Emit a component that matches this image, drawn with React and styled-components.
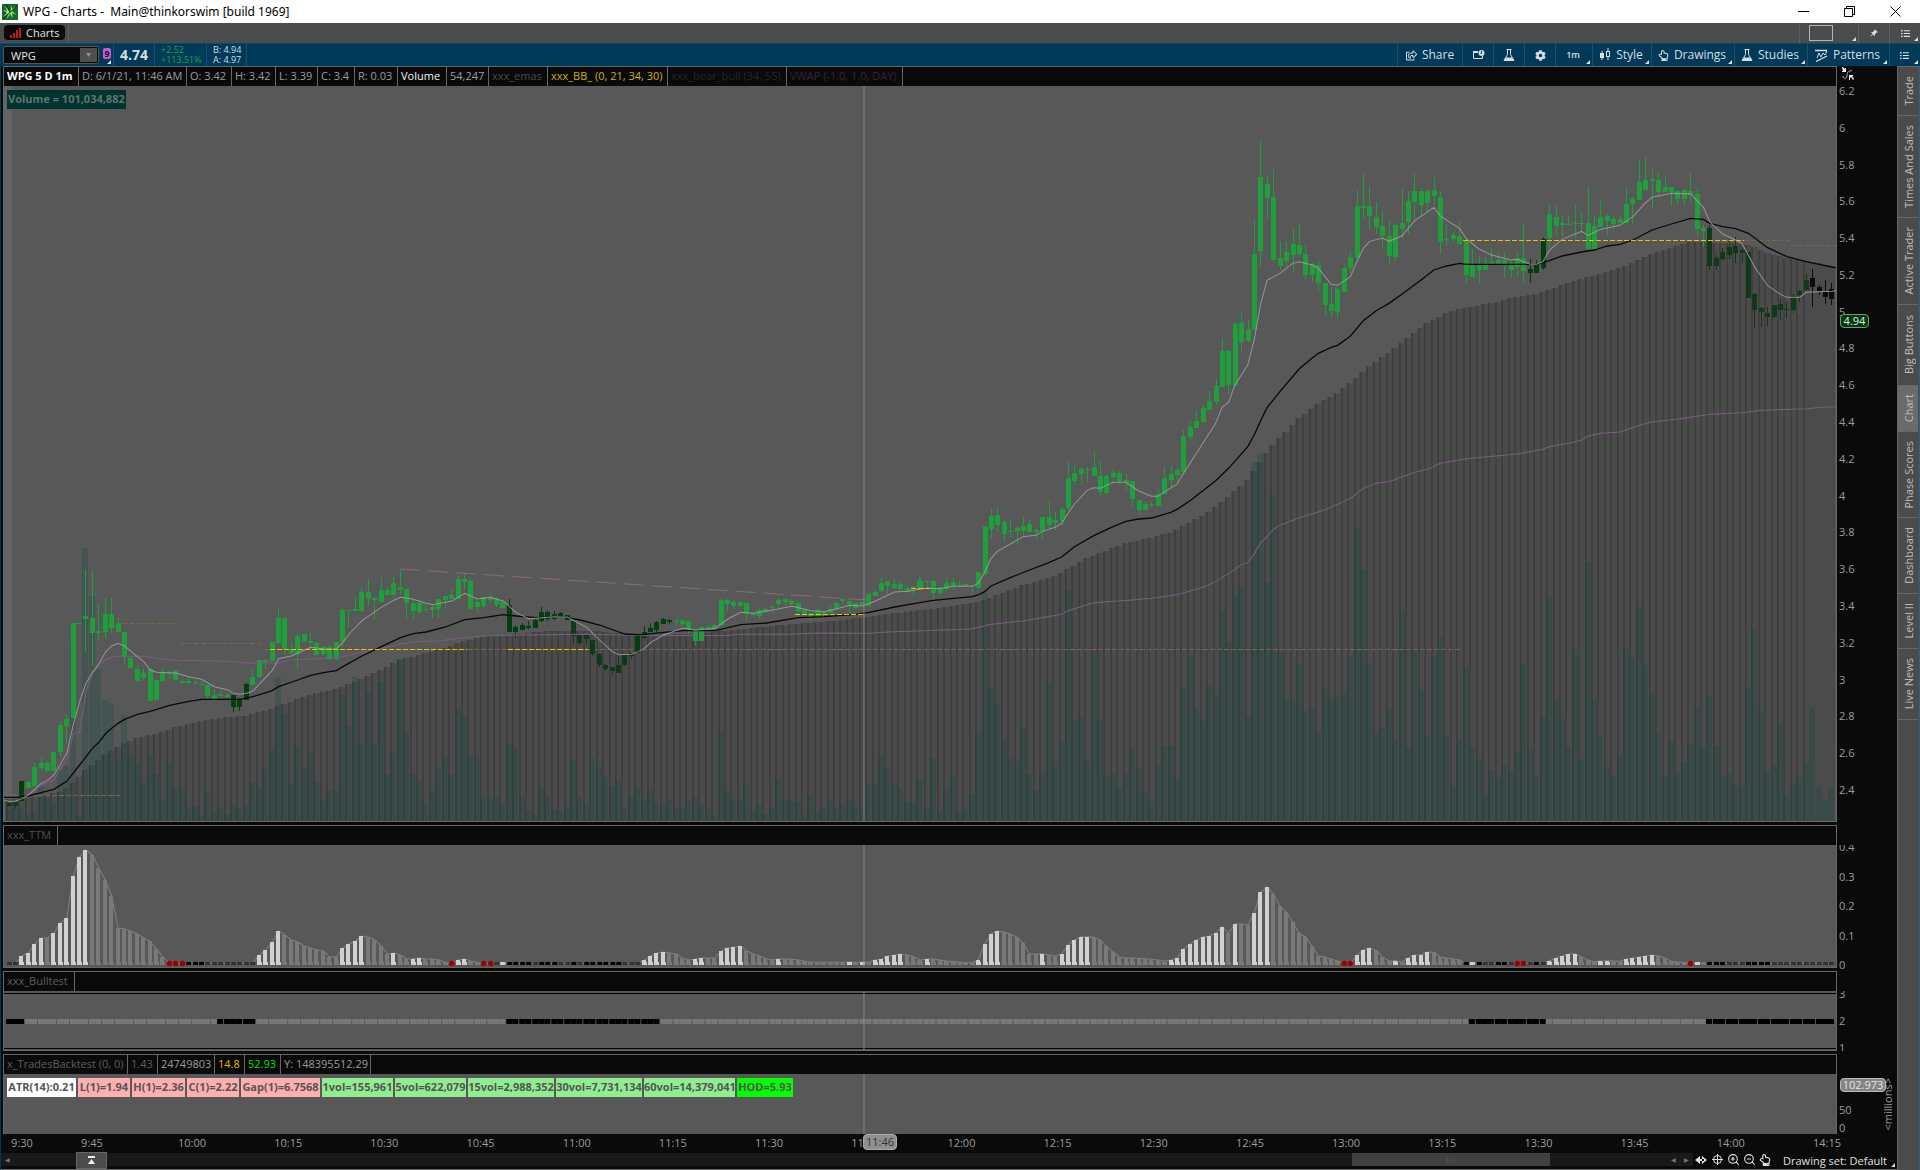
import React from "react";
import styled, { createGlobalStyle, css } from "styled-components";
import { ZoomIn, ZoomOut } from "lucide-react";
import {
  FaCog,
  FaListUl,
  FaRegHandPointUp,
  FaRegShareSquare,
} from "react-icons/fa";
import { BsPinAngleFill } from "react-icons/bs";

const GlobalStyle = createGlobalStyle`
  * {
    box-sizing: border-box;
  }
  body {
    margin: 0;
    background: #0a0a0a;
    color: #9c9c9c;
    font-family: "Open Sans", "Noto Sans", sans-serif;
    font-size: 11px;
  }
  button, input {
    font: inherit;
    color: inherit;
    background: none;
    border: 0;
    padding: 0;
    margin: 0;
  }
`;

/* ---------- chart data ---------- */

// plot units: 3 per pixel, counted down from y = 110
const toY = (v) => 110 + v / 3;
const STEP = 6.415;
const barX = (i) => 9 + i * STEP;
const PLOT_BOTTOM = 821;
const CROSSHAIR_X = 863;

const shift = (offset, list) => list.map((v) => v + offset);

// "high top bottom low", separated by commas
const candles = (offset, text) =>
  text.split(",").map((row) => shift(offset, row.trim().split(" ").map(Number)));

const CANDLES = [
  ...candles(
    1230,
    `848 848 858 858,845 845 858 868,783 783 842 842,786 786 804 804,725 741 798 800,712 729 743 750,
    724 729 752 752,697 697 752 752,606 615 696 712,585 597 618 670,309 309 594 594,309 309 312 312,
    150 288 297 400,150 294 338 438,255 333 340 360,235 282 335 356,235 282 324 338,294 309 335 335,
    335 335 411 436,408 413 443 448,435 447 483 483,443 459 474 484,445 447 543 543,480 480 540 540,
    445 459 483 483,450 460 463 477,449 453 480 484,477 484 489 493,470 484 489 492,480 486 489 491,
    482 491 494 496,495 495 527 540,510 525 537 537,514 521 527 527,519 524 530 530,524 524 561 575,
    533 537 561 572,490 492 540 540,448 471 495 495,420 420 471 475,420 420 426 448,366 366 423 423,
    262 294 369 369,290 294 388 405,366 388 399 405,333 348 403 448,342 342 364 370,333 364 370 388,
    366 370 405 405,378 382 402 408,376 382 416 420,366 366 416 422,262 269 366 380,269 269 273 320,
    230 266 272 272,202 216 273 276,178 216 237 258,233 235 240 300,172 210 245 245,202 210 225 225,
    172 190 224 235,150 201 209 222,207 207 249 300,240 248 273 300,240 248 276 281,255 266 269 276,
    255 260 269 294,236 236 266 294,228 228 240 260,206 225 237 237,166 178 237 237,162 178 186 210,
    175 183 266 270,240 246 262 278,231 231 258 263,218 234 240 249,230 237 255 262,244 247 264 264,
    238 255 335 335,316 321 335 355,310 315 330 330,304 318 324 327,298 300 324 324,261 276 304 306,
    270 276 298 304,272 281 297 301,276 279 288 288,284 284 299 299,303 303 348 375,340 346 369 375,
    342 345 357 375,360 360 402 408,400 402 435 440,432 435 447 453,440 440 454 465,405 435 459 459,
    403 403 434 438,400 400 407 416,346 348 400 400`
  ),
  ...candles(
    930,
    `618 636 654 658,608 624 636 636,602 605 630 635,595 597 612 612,597 600 606 613,598 603 606 616,
    600 600 612 618,603 603 628 641,628 628 663 676,620 620 663 663,615 622 630 630,610 614 626 626,
    538 540 614 618,536 540 552 572,540 546 557 568,542 546 557 557,549 549 583 602,580 580 585 590,
    563 570 587 596,562 567 573 573,556 560 564 578,534 540 552 563,536 538 545 557,536 543 551 556,
    549 549 573 590,566 570 582 582,578 578 591 603,568 570 591 591,576 576 585 595,558 567 579 579,
    545 549 567 567,537 537 543 552,543 543 556 580,549 549 563 568,545 545 558 558,518 522 557 557,
    512 516 528 528,471 489 513 517,483 483 498 522,477 492 504 508,485 492 507 515,497 504 515 515,
    497 502 506 528,472 483 507 507,483 483 486 500,480 483 518 546,500 502 519 524,472 489 507 512,
    472 486 497 510,484 494 497 497,490 492 497 500,494 494 498 526,456 456 504 504,318 318 462 467,
    267 288 327 353,258 285 315 333,300 306 342 364,298 333 336 350,318 324 333 373,292 318 333 348,
    300 312 335 335,325 330 336 358,291 291 332 358,241 291 315 326,275 300 309 330,262 267 303 315,
    126 174 264 270,136 159 183 195,142 147 162 192,142 147 150 187,94 141 168 168,126 168 216 229,
    162 168 219 222,148 159 171 192,154 159 183 192,160 180 189 212,183 183 237 262,240 240 270 286,
    242 252 270 270,246 252 255 262,208 222 258 258,142 174 222 222,136 162 180 206,142 150 165 190`
  ),
  ...candles(
    0,
    `960 978 1085 1090,935 951 981 993,901 933 954 954,886 894 936 940,842 873 900 900,808 828 876 885,
    685 723 830 830,720 723 825 852,636 642 825 832,610 639 696 730,630 657 693 698,327 432 660 660,
    91 201 423 467,196 222 264 327,178 261 450 450,393 444 468 480,394 426 453 472,355 402 435 487,
    340 405 433 440,402 432 495 511,460 463 495 517,454 465 520 545,519 519 585 616,532 582 603 625,
    530 537 606 625,466 474 545 545,422 441 474 488,241 288 444 444,190 288 294 327,229 288 318 361,
    276 321 351 372,300 348 378 418,334 378 438 465,340 345 441 454,235 339 357 388,244 273 336 373,
    190 243 276 327,235 243 285 318,236 243 279 310,202 240 258 283,244 261 396 433,345 387 390 408,
    366 375 387 397,334 378 402 406,388 390 495 520,418 462 501 501,438 465 480 520,440 459 480 480,
    415 456 462 462,422 450 462 462,430 450 463 504,451 459 480 504,427 444 472 500,340 444 483 516,
    448 477 489 520,450 462 489 489,382 387 474 480,283 312 384 415,288 321 348 378,318 339 346 380,
    316 342 346 346,283 339 342 388,307 339 342 372,229 339 417 417,316 348 417 417,274 321 351 351,
    312 318 333 374,318 327 342 360,316 327 340 340,229 282 339 339,258 267 282 346,150 216 270 270,
    142 210 240 240,178 207 213 294,190 210 246 262,195 231 246 246,231 231 246 289,240 243 267 286,
    238 240 267 286,190 244 255 276,235 252 357 380,346 354 363 412,346 354 468 480,435 444 468 480,
    415 426 447 454,388 411 435 448,382 408 430 460,415 420 430 458,426 426 564 564,550 552 600 650,
    592 594 606 651,592 609 621 648,585 585 621 625,568 582 600 630,577 597 600 625,553 558 600 610,
    540 543 555 577,492 510 540 540,478 504 531 592,526 531 544 556,510 543 561 583,520 537 567 586`
  ),
];

const VOLUME = [
  ...shift(1230, [
    850, 860, 866, 885, 880, 797, 835, 850, 750, 738, 370, 887, 84, 228, 447,
    540, 548, 722, 585, 702, 730, 790, 702, 763, 840, 727, 804, 804, 861, 858,
    884, 813, 876, 864, 882, 854, 868, 859, 786, 804, 747, 690, 472, 582, 790,
    678, 747, 699, 786, 843, 810, 813, 524, 618, 471, 672, 517, 670, 486, 762,
    699, 418, 637, 763, 782, 852, 813, 747, 712, 762, 567, 588, 706, 714, 832,
    838, 831, 855, 672, 684, 830, 873, 885, 801, 828, 871, 874, 859, 716, 831,
    853, 714, 738, 770, 799, 784, 868, 831, 801,
  ]),
  ...shift(930, [
    1143, 1110, 1149, 1149, 1140, 1163, 1164, 1143, 1131, 1155, 1167, 1186,
    936, 1113, 1137, 1140, 1089, 1170, 1152, 1182, 1164, 1078, 1140, 1143,
    1146, 1186, 1125, 1173, 1164, 1140, 1168, 1155, 1137, 1158, 1164, 1095,
    1092, 1008, 1047, 1092, 1104, 1147, 1147, 1077, 1164, 1014, 1174, 1109,
    1068, 1177, 1167, 1122, 942, 520, 807, 850, 960, 1015, 1023, 922, 1062,
    1109, 1062, 786, 1026, 966, 510, 903, 891, 1024, 693, 898, 1068, 1062,
    1104, 1062, 988, 1047, 1119, 1146, 1038, 978, 978, 1077, 804, 708, 867,
    904, 798, 825, 570, 666, 525, 501, 885, 126, 102, 486, 225,
  ]),
  ...shift(1110, [
    517, 657, 660, 555, 693, 684, 758, 627, 657, 651, 643, 531, 144, 269, 555,
    763, 744, 687, 780, 390, 801, 510, 633, 768, 528, 471, 766, 921, 777, 561,
    801, 835, 945, 870, 894, 853, 873, 813, 552, 811, 891, 711, 351, 657, 717,
    804, 510, 838, 246, 657, 768, 858, 888, 827, 507, 534, 378, 555, 640, 759,
    888, 783, 879, 847, 790, 678, 801, 645, 798, 888, 882, 915, 921, 621, 447,
    693, 873, 855, 729, 945, 912, 894, 847, 681, 921, 960, 924,
  ]),
];

// "bar value" pairs, linear between them
const pairs = (offset, text) =>
  text.split(",").map((p) => {
    const [i, v] = p.trim().split(" ").map(Number);
    return [i, v + offset];
  });

const FAST = [
  ...pairs(
    1230,
    `-1 840,0 844,1 844,2 836,3 825,5 790,6 781,7 765,9 700,10 615,11 545,12 490,13 457,14 433,15 397,16 378,
    17 370,18 378,20 410,21 425,22 450,23 457,26 459,28 470,30 478,32 500,34 509,35 520,36 523,37 520,38 513,
    40 472,41 452,42 416,44 408,47 382,49 387,51 387,52 367,53 342,55 302,58 262,60 240,61 232,63 238,65 250,
    66 254,69 243,71 220,73 237,75 232,77 243,78 260,79 278,81 296,85 290,87 292,90 322,92 360,94 395,95 404,
    97 403,98 395`
  ),
  ...pairs(
    930,
    `99 685,100 667,102 645,105 624,107 631,110 625,112 597,114 577,116 580,119 570,122 559,125 572,127 575,
    129 566,131 556,133 558,135 543,138 516,140 514,143 504,145 506,147 499,150 499,151 490,152 457,153 415,
    154 394,156 372,158 350,160 346,161 334,163 322,164 310,165 280,166 252,168 211,169 203,170 205,172 187,
    174 187,176 213,178 229,179 229,182 192`
  ),
  ...pairs(
    0,
    `183 1090,184 1060,186 1000,188 940,189 892,190 877,191 825,193 765,194 690,195 582,196 511,198 490,
    200 460,201 455,203 465,204 475,206 523,207 526,209 500,210 455,211 415,212 394,214 384,215 394,217 378,
    219 332,222 292,223 318,224 331,226 355,227 385,229 417,231 435,234 450,235 448,237 463,238 463,239 455,
    240 420,242 388,245 364,246 376,248 358,251 346,253 320,255 278,256 262,259 250,262 252,264 292,265 336,
    267 372,269 390,270 400,272 472,274 527,276 553,277 562,279 562,280 547,284 544,285 541`
  ),
];

const SLOW = [
  ...pairs(
    1230,
    `-1 832,1 832,3 828,5 818,7 808,9 784,11 735,13 685,14 667,15 642,16 625,17 610,18 598,20 583,22 574,
    25 556,28 544,30 538,36 538,38 530,41 512,42 500,45 480,47 466,49 458,51 452,52 440,55 408,58 380,61 353,
    63 341,65 336,68 321,71 299,74 293,77 284,79 288,82 293,86 290,89 300,92 315,95 336,96 342,98 344`
  ),
  ...pairs(
    930,
    `99 643,102 637,105 632,110 632,114 614,118 609,123 593,127 590,132 583,134 577,138 561,141 551,144 541,
    150 530,151 525,152 515,153 498,156 473,159 450,162 428,164 411,166 380,169 347,172 320,174 304,176 297,
    178 294,181 277`
  ),
  ...pairs(
    0,
    `182 1198,184 1172,186 1142,188 1112,190 1075,193 1010,194 975,195 932,196 893,198 845,201 777,203 745,
    204 730,206 712,207 706,209 678,211 632,213 602,215 580,217 553,220 510,222 480,224 468,226 460,227 463,
    238 463,240 452,242 438,245 426,247 420,249 408,251 403,253 390,256 360,259 342,262 325,264 328,265 340,
    267 350,269 356,271 370,274 413,277 440,280 455,284 471,285 475`
  ),
];

const VWAP = [
  ...pairs(
    1230,
    `-1 824,1 824,2 832,3 828,5 795,7 780,8 745,9 720,10 640,11 637,12 515,13 460,14 433,15 420,16 412,17 409,
    21 409,23 415,26 421,34 424,37 429,42 429,44 419,50 415,52 410,55 397,57 390,61 372,64 364,67 363,70 355,
    74 348,80 345,90 343,98 346`
  ),
  ...pairs(
    930,
    `99 647,112 646,114 643,122 643,126 639,134 640,137 636,150 627,153 613,158 603,164 583,165 572,169 548,
    175 540,178 535,182 524,186 502,188 485,191 448,192 433,193 428,194 402,195 368,196 350,197 328,198 316,
    201 293,205 270`
  ),
  ...pairs(
    0,
    `209 1165,211 1135,213 1120,215 1115,219 1087,221 1078,223 1060,227 1046,235 1032,239 1018,240 1010,
    243 1000,245 990,246 978,248 970,251 966,254 946,256 936,261 925,265 913,270 908,273 901,280 896,283 891,
    285 891`
  ),
];

const CLOUD = [
  ...pairs(
    1230,
    `0 838,5 830,8 815,10 790,12 750,14 720,16 692,18 670,20 655,23 642,26 622,30 604,34 592,37 588,41 566,
    44 545,47 524,51 508,54 485,58 450,61 420,65 400,68 385,70 368,74 350,78 344,85 332,91 332,98 345`
  ),
  ...pairs(
    930,
    `99 647,108 640,111 634,115 626,122 612,128 604,133 593,138 580,145 565,150 550,152 540,155 518,158 496,
    162 475,164 458,168 415,172 385,174 370,176 362,178 354,181 338,184 310,187 275`
  ),
  ...pairs(
    0,
    `188 1190,190 1160,193 1110,195 1055,197 1005,199 965,201 925,204 882,207 850,210 803,212 768,215 728,
    218 685,221 640,224 610,226 597,229 587,232 575,235 560,238 552,240 540,242 525,245 507,248 492,251 475,
    254 450,256 432,259 415,262 395,264 395,266 400,268 398,270 402,272 410,274 430,277 443,280 452,285 472`
  ),
];

const valueAt = (series, i) => {
  const next = series.findIndex(([x]) => x >= i);
  if (next <= 0) return series[0][1];
  const [x0, y0] = series[next - 1];
  const [x1, y1] = series[next];
  return y0 + ((y1 - y0) * (i - x0)) / (x1 - x0);
};

const linePoints = (series) =>
  series.map(([i, v]) => `${barX(i)},${toY(v)}`).join(" ");

// numbers are bar tops, letters are the dots drawn when there is no bar
const TTM = `d d 408 399 372 354 354 339 309 294 168 111 90 105 144 180 228 324 327 333 342 354 364 388 411
  r r r k k k d d d d d d d d 405 390 366 333 345 360 366 378 384 390 393 411 411 384 372 363 348 351 360
  378 402 399 405 417 416 414 417 417 420 427 r 420 417 423 428 r r d w k k k k d k k k d d k d k k k k k k
  d d d 420 408 399 396 399 402 415 420 417 414 414 414 393 384 381 378 393 402 408 416 420 417
  417 418 420 424 427 427 427 427 427 427 426 427 426 426 420 417 408 405 402 405 411 420 417 417 420
  423 424 426 428 428 420 372 342 333 336 342 351 370 402 402 401 405 409 402 375 360 351 350 352 360 378
  396 411 414 414 415 416 418 420 424 420 414 387 372 360 351 348 339 321 339 312 312 315 279 216 201
  222 258 276 306 340 351 378 408 411 417 423 r r 405 390 384 391 411 423 422 426 414 405 404 396 397 411
  414 417 420 k w k d d k k d r r d k d 423 414 408 402 401 411 420 425 423 422 423 424 417 414 411 408 405
  408 414 424 426 427 r w f k k k d d d k k k k d d d d d d d d d d`
  .trim()
  .split(/\s+/)
  .slice(0, CANDLES.length);

const DOT_COLORS = { d: "#333", k: "#000", w: "#d0d0d0", r: "#a00000", f: "#777" };

const isDark = (i) =>
  i <= 2 ||
  (i >= 35 && i <= 37) ||
  (i >= 78 && i <= 103) ||
  (i >= 237 && i <= 239) ||
  i >= 265;

const candleColor = (i) => {
  if (i >= 281) return "#0c0c0c";
  if (i >= 265 || i <= 1 || (i >= 88 && i <= 97)) return "#12381c";
  return isDark(i) ? "#053d13" : "#1f9f3c";
};

const isBear = (i) =>
  i <= 2 ||
  (i >= 33 && i <= 38) ||
  (i >= 78 && i <= 101) ||
  (i >= 228 && i <= 239) ||
  i >= 265;

// x1, x2, y
const YELLOW_LEVELS = [
  [270, 467, 649],
  [508, 588, 649],
  [795, 865, 614],
  [911, 929, 588],
  [1462, 1743, 240],
];
const ORANGE_LEVELS = [
  [10, 121, 795],
  [122, 179, 623],
  [180, 261, 643],
  [264, 1460, 649],
  [1743, 1788, 240],
  [1790, 1835, 245],
];

const HEADER_CELLS = [
  { text: "WPG 5 D 1m", width: 75, color: "#fff", bold: true },
  { text: "D: 6/1/21, 11:46 AM", width: 108 },
  { text: "O: 3.42", width: 45 },
  { text: "H: 3.42", width: 44 },
  { text: "L: 3.39", width: 42 },
  { text: "C: 3.4", width: 37 },
  { text: "R: 0.03", width: 43 },
  { text: "Volume", width: 49, color: "#f2f2f2" },
  { text: "54,247", width: 42 },
  { text: "xxx_emas", width: 59, color: "#4a4a4a" },
  { text: "xxx_BB_ (0, 21, 34, 30)", width: 120, color: "#cfae0c" },
  { text: "xxx_bear_bull (34, 55)", width: 119, color: "#262626" },
  { text: "VWAP (-1.0, 1.0, DAY)", width: 116, color: "#37223a" },
];

const BACKTEST_CELLS = [
  { text: "x_TradesBacktest (0, 0)", width: 124, color: "#5e5e5e" },
  { text: "1.43", width: 30, color: "#5e5e5e" },
  { text: "24749803", width: 57 },
  { text: "14.8", width: 30, color: "#e0b400" },
  { text: "52.93", width: 36, color: "#00e000" },
  { text: "Y: 148395512.29", width: 90 },
];

const LABELS = [
  { text: "ATR(14):0.21", width: 69, color: "#fff" },
  { text: "L(1)=1.94", width: 52, color: "#ffafaf" },
  { text: "H(1)=2.36", width: 53, color: "#ffafaf" },
  { text: "C(1)=2.22", width: 52, color: "#ffafaf" },
  { text: "Gap(1)=6.7568", width: 79, color: "#ffafaf" },
  { text: "1vol=155,961", width: 71, color: "#90ee90" },
  { text: "5vol=622,079", width: 71, color: "#90ee90" },
  { text: "15vol=2,988,352", width: 86, color: "#90ee90" },
  { text: "30vol=7,731,134", width: 86, color: "#90ee90" },
  { text: "60vol=14,379,041", width: 91, color: "#90ee90" },
  { text: "HOD=5.93", width: 56, color: "#00ff00" },
];

const PRICES = Array.from({ length: 20 }, (_, i) => String((62 - i * 2) / 10));

const TIMES = [
  "10:00", "10:15", "10:30", "10:45", "11:00", "11:15", "11:30", "11:45",
  "12:00", "12:15", "12:30", "12:45", "13:00", "13:15", "13:30", "13:45",
  "14:00", "14:15",
];

const SIDE_TABS = [
  { text: "Trade", height: 49 },
  { text: "Times And Sales", height: 102 },
  { text: "Active Trader", height: 87 },
  { text: "Big Buttons", height: 81 },
  { text: "Chart", height: 46, active: true },
  { text: "Phase Scores", height: 86 },
  { text: "Dashboard", height: 76 },
  { text: "Level II", height: 55 },
  { text: "Live News", height: 71 },
];

/* ---------- window chrome ---------- */

const Page = styled.div`
  display: flex;
  flex-direction: column;
  min-height: 100vh;
`;

const TitleBar = styled.header`
  display: flex;
  align-items: center;
  height: 23px;
  padding: 0 2px;
  background: #fff;
  color: #000;
`;

const WindowTitle = styled.h1`
  flex: 1;
  margin: 0 0 0 5px;
  font-family: "Noto Sans", sans-serif;
  font-size: 12px;
  font-weight: 400;
  white-space: pre;
`;

const WindowButton = styled.button`
  display: flex;
  align-items: center;
  justify-content: center;
  width: 46px;
  height: 20px;
`;

const TabBar = styled.nav`
  display: flex;
  height: 20px;
  background: #4b4b4b;
`;

const ChartsTab = styled.button`
  display: flex;
  align-items: center;
  gap: 5px;
  height: 15px;
  margin: 2px 3px 0 4px;
  padding: 0 6px;
  border-radius: 4px;
  background: #0a0a0a;
  color: #e0e0e0;
`;

const Corner = css`
  &::after {
    content: "";
    position: absolute;
    right: 2px;
    bottom: 2px;
    border-left: 4px solid transparent;
    border-bottom: 4px solid #ddd;
  }
`;

const TabBarButton = styled.button`
  position: relative;
  display: flex;
  align-items: center;
  justify-content: center;
  width: ${(props) => props.$width}px;
  border-left: 1px solid #5e5e5e;
  color: #ddd;
  ${(props) => props.$menu && Corner}
`;

const TabBarSpace = styled.div`
  flex: 1;
  border-left: 1px solid #5e5e5e;
`;

const ScreenBox = styled.span`
  width: 24px;
  height: 16px;
  margin-right: 16px;
  border: 1px solid #b5b5b5;
`;

const Toolbar = styled.div`
  display: flex;
  height: 23px;
  padding-left: 3px;
  border-top: 1px solid #0b4a6b;
  background: #003a58;
  color: #d8dde0;
`;

const SymbolBox = styled.label`
  display: flex;
  align-items: center;
  width: 96px;
  height: 18px;
  margin: 2px 4px 0 0;
  border: 1px solid #555;
  border-radius: 2px;
  background: #0a0a0a;
`;

const SymbolInput = styled.input`
  flex: 1;
  min-width: 0;
  padding-left: 7px;
  color: #e6e6e6;
  outline: 0;
`;

const SymbolArrow = styled.button`
  width: 17px;
  height: 14px;
  margin-right: 1px;
  background: #4f4f4f;
  color: #999;
  font-size: 7px;
  line-height: 14px;
`;

const LinkBadge = styled.button`
  position: relative;
  width: 10px;
  height: 22px;
  padding-bottom: 3px;
  ${Corner}

  span {
    display: block;
    width: 8px;
    height: 11px;
    border-radius: 2px;
    background: #c55bd0;
    color: #000;
    font-size: 8px;
    font-weight: 700;
    line-height: 11px;
    text-align: center;
  }
`;

const Quote = styled.div`
  display: flex;
  flex-direction: column;
  justify-content: center;
  width: ${(props) => props.$width}px;
  padding-left: 6px;
  border-left: 1px solid #1d4f6a;
  color: ${(props) => props.$color || "#d8dde0"};
  font-size: 9px;
  line-height: 10px;
  white-space: nowrap;
`;

const LastPrice = styled(Quote)`
  font-size: 14px;
  font-weight: 700;
`;

const ToolbarSpace = styled.div`
  flex: 1;
  border-left: 1px solid #1d4f6a;
`;

const ToolButton = styled.button`
  position: relative;
  display: flex;
  align-items: center;
  justify-content: center;
  gap: 5px;
  width: ${(props) => props.$width}px;
  padding-right: ${(props) => (props.$menu ? 2 : 0)}px;
  border-left: 1px solid #1d4f6a;
  font-size: ${(props) => (props.$small ? 9 : 12)}px;
  font-weight: ${(props) => (props.$small ? 600 : 400)};
  line-height: 18px;
  white-space: nowrap;
  ${(props) => props.$menu && Corner}
`;

/* ---------- chart area ---------- */

const Body = styled.main`
  display: flex;
  flex: 1;
  border-left: 1px solid #003a58;
  border-right: 1px solid #2b6288;
`;

const ChartArea = styled.section`
  flex: 1;
  min-width: 0;
  display: flex;
  flex-direction: column;
`;

const PanelRow = styled.div`
  display: flex;
  margin-bottom: ${(props) => (props.$last ? 0 : 3)}px;
`;

const Panel = styled.div`
  flex: 1;
  min-width: 0;
  margin-left: 2px;
  border: 1px solid #666;
  border-bottom-width: ${(props) => (props.$last ? 0 : 1)}px;
  background: #0a0a0a;
`;

const StudyHeader = styled.div`
  display: flex;
  height: 19px;
`;

const StudyCell = styled.span`
  width: ${(props) => props.$width}px;
  padding-left: 3px;
  border-right: 1px solid #666;
  color: ${(props) => props.$color || "#9c9c9c"};
  font-weight: ${(props) => (props.$bold ? 700 : 400)};
  line-height: 17px;
  white-space: nowrap;
`;

const Plot = styled.div`
  position: relative;
  height: ${(props) => props.$height}px;
  background: #585858;

  svg {
    display: block;
    width: 100%;
    height: 100%;
  }
`;

const VolumeLabel = styled.span`
  position: absolute;
  top: 4px;
  left: 3px;
  height: 19px;
  padding: 0 1px;
  background: #00332f;
  color: #5f7472;
  font-weight: 700;
  line-height: 18px;
  white-space: nowrap;
`;

const LabelRow = styled.div`
  position: absolute;
  top: 4px;
  left: 3px;
  display: flex;
  gap: 2px;
`;

const ChartLabel = styled.span`
  width: ${(props) => props.$width}px;
  height: 19px;
  background: ${(props) => props.$color};
  color: #555;
  font-weight: 700;
  line-height: 18px;
  text-align: center;
  white-space: nowrap;
`;

const Axis = styled.div`
  position: relative;
  display: flex;
  flex-direction: column;
  justify-content: space-between;
  width: 60px;
  padding: ${(props) => props.$padding || "20px 0 0"};
  padding-left: 2px;
  line-height: 12px;
`;

const ClippedTicks = styled.div`
  display: flex;
  flex: 1;
  flex-direction: column;
  justify-content: space-between;
  margin: ${(props) => (props.$open ? "-4px 0 0" : "-3px 0")};
`;

const TickWindow = styled.div`
  display: flex;
  flex: 1;
  overflow: hidden;
  margin-bottom: ${(props) => (props.$open ? -3 : 0)}px;
`;

const PriceBadge = styled.span`
  position: absolute;
  top: 248px;
  left: 3px;
  width: 29px;
  height: 14px;
  border: 1px solid #6f9c78;
  border-radius: 4px;
  background: #003b10;
  color: #e4e4e4;
  line-height: 12px;
  text-align: center;
`;

const ValueBadge = styled(PriceBadge)`
  top: 24px;
  width: 46px;
  border-color: #bbb;
  background: #858585;
`;

const AxisUnit = styled.span`
  position: absolute;
  top: 24px;
  right: 3px;
  writing-mode: vertical-rl;
  transform: rotate(180deg);
`;

const AxisToggle = styled.button`
  position: absolute;
  top: 1px;
  left: 4px;
  width: 13px;
  height: 13px;
`;

const TimeAxis = styled.div`
  position: relative;
  display: flex;
  height: 19px;
  padding-left: 7px;
  line-height: 18px;
`;

const Time = styled.span`
  width: 28px;
  text-align: center;
`;

const EarlyTimes = styled.div`
  display: flex;
  width: 170px;
  gap: 42px;
`;

const HourTimes = styled.div`
  display: flex;
  flex: 1;
  justify-content: space-between;
  margin-right: 56px;
`;

const CursorTime = styled.span`
  position: absolute;
  top: 0;
  left: 862px;
  width: 34px;
  height: 16px;
  border: 1px solid #aaa;
  border-radius: 4px;
  background: #8f8f8f;
  color: #333;
  line-height: 14px;
  text-align: center;
`;

const ScrollRow = styled.div`
  display: flex;
  align-items: center;
  height: 17px;
  border-bottom: 1px solid #666;
  color: #e0e0e0;
`;

const ScrollTrack = styled.div`
  flex: 1;
  display: flex;
  align-items: center;
  height: 13px;
  margin-bottom: 3px;
  background: #191919;
  color: #777;
  font-size: 6px;
`;

const ScrollArrow = styled.button`
  width: 13px;
`;

const ExpandButton = styled.button`
  align-self: flex-start;
  display: flex;
  align-items: center;
  justify-content: center;
  width: 31px;
  height: 17px;
  margin: -1px 0 0 62px;
  border: 1px solid #666;
  background: #4b4b4b;
  flex-shrink: 0;
`;

const ScrollThumb = styled.div`
  display: flex;
  align-items: center;
  justify-content: center;
  width: 198px;
  height: 13px;
  margin: 0 117px 0 auto;
  background: #404040;
`;

const FooterTool = styled.button`
  display: flex;
  align-items: center;
  justify-content: center;
  width: 16px;
  height: 14px;
  margin-bottom: 3px;
`;

const DrawingSet = styled.button`
  position: relative;
  width: 124px;
  height: 16px;
  margin-bottom: 1px;
  line-height: 13px;
  text-align: center;
  white-space: nowrap;
  ${Corner}
`;

const SideTabs = styled.nav`
  width: 22px;
  background: #4b4b4b;
  border-left: 1px solid #666;
  border-top: 1px solid #666;
`;

const SideTab = styled.button`
  display: flex;
  align-items: center;
  justify-content: center;
  width: 20px;
  height: ${(props) => props.$height}px;
  border-bottom: 1px solid #666;
  background: ${(props) => (props.$active ? "#6b6b6b" : "transparent")};
  color: #bdbdbd;

  span {
    writing-mode: vertical-rl;
    transform: rotate(180deg);
    white-space: nowrap;
  }
`;

/* ---------- drawings ---------- */

const Logo = () => (
  <svg width="16" height="16" viewBox="0 0 16 16" aria-hidden="true">
    <rect width="16" height="16" fill="#14692c" />
    <path
      d="M8 8 3 2l2 5-4-1 4 3-4 4 5-3-1 5 3-5 3 4-1-5 5 2-5-4 4-5-4 3V1L8 8z"
      fill="#9ee07c"
    />
    <path d="M1 15 15 2M4 0l4 8" stroke="#06260f" strokeWidth="1" />
  </svg>
);

const BarsIcon = () => (
  <svg width="11" height="11" viewBox="0 0 11 11" aria-hidden="true">
    <path d="M1 11V8M4 11V6M7 11V3M10 11V1" stroke="#b82020" strokeWidth="2" />
  </svg>
);

const CandlesIcon = () => (
  <svg width="12" height="14" viewBox="0 0 12 14" aria-hidden="true">
    <path d="M3 3v9M9 0v12" stroke="#ddd" />
    <rect x="1" y="5" width="4" height="5" fill="#ddd" />
    <rect x="7.5" y="3.5" width="3" height="5" fill="#003a58" stroke="#ddd" />
  </svg>
);

const CalendarIcon = () => (
  <svg width="13" height="12" viewBox="0 0 13 12" aria-hidden="true">
    <path d="M6 2.500H1.500v7h9V7" fill="none" stroke="#ddd" />
    <path d="M1 3h5" stroke="#ddd" strokeWidth="2" />
    <circle cx="9.500" cy="4" r="3" fill="#ddd" />
    <path d="M9.500 2v2.500h-1" fill="none" stroke="#003a58" />
  </svg>
);

const FlaskIcon = () => (
  <svg width="12" height="13" viewBox="0 0 12 13" aria-hidden="true">
    <path d="M3.500.500h5M4.500.500v5l-3.500 6h10l-3.500-6v-5" fill="none" stroke="#ddd" />
    <path d="M3 8.500h6l2 3.500H1z" fill="#ddd" />
  </svg>
);

const PatternsIcon = () => (
  <svg width="13" height="13" viewBox="0 0 13 13" aria-hidden="true">
    <path d="M0 1.500h12M1 12.500 12 7" fill="none" stroke="#ddd" strokeWidth="1.300" />
    <path d="m2 9 2-5 2 4 2-4 2 2 2-4" fill="none" stroke="#ddd" />
  </svg>
);

const ScaleIcon = () => (
  <svg width="13" height="13" viewBox="0 0 13 13" aria-hidden="true">
    <path d="M1 0h1l2 2V1h1v4H1V4h1zM8 8h4v1h-1l2 3-1 1-2-3-1 1v2H8z" fill="#eee" />
    <path d="M2 9c0 4 4 3 4 0s1-6 5-5" fill="none" stroke="#aaa" />
  </svg>
);

const PanIcon = () => (
  <svg width="12" height="8" viewBox="0 0 12 8" aria-hidden="true">
    <path d="M0 4 5 0v8zM12 4 7 0v8zM3 3h6v2H3z" fill="#e0e0e0" />
  </svg>
);

const CrossIcon = () => (
  <svg width="11" height="11" viewBox="0 0 11 11" aria-hidden="true">
    <circle cx="5.500" cy="5.500" r="4" fill="none" stroke="#ddd" />
    <path d="M5.500 0v11M0 5.500h11" stroke="#ddd" />
  </svg>
);

const ExpandIcon = () => (
  <svg width="9" height="9" viewBox="0 0 9 9" aria-hidden="true">
    <path d="M1 1h7" stroke="#eee" strokeWidth="2" />
    <path d="m4.500 3 3.500 5H1z" fill="#eee" />
  </svg>
);

const CrosshairLine = () => (
  <line
    x1={CROSSHAIR_X + 0.5}
    x2={CROSSHAIR_X + 0.5}
    y1="0"
    y2="1170"
    stroke="#858585"
  />
);

const PriceChart = () => (
  <svg viewBox="4 86 1831 735" preserveAspectRatio="none" role="img" aria-label="WPG price chart">
    <rect x="4" y="86" width="8" height="735" fill="#636363" />
    {CANDLES.map((_, i) => {
      const y = toY(valueAt(CLOUD, i));
      return (
        <g key={i} shapeRendering="crispEdges">
          <rect x={barX(i) - 4} y={y} width={STEP + 0.5} height={PLOT_BOTTOM - y} fill="#4b4b4b" />
          {i < 281 && (
            <rect x={Math.floor(barX(i)) - 3} y={y} width="2" height={PLOT_BOTTOM - y} fill="#3f3f3f" />
          )}
        </g>
      );
    })}
    {VOLUME.map((v, i) => (
      <rect
        key={i}
        x={Math.floor(barX(i)) - 3}
        y={toY(v)}
        width="6"
        height={PLOT_BOTTOM - toY(v)}
        fill="#004a40"
        fillOpacity="0.22"
        shapeRendering="crispEdges"
      />
    ))}
    <g stroke="#7c634a" strokeDasharray="5 2" shapeRendering="crispEdges">
      {ORANGE_LEVELS.map(([x1, x2, y]) => (
        <line key={x1} x1={x1} x2={x2} y1={y + 0.5} y2={y + 0.5} />
      ))}
    </g>
    <line x1="400" y1="569" x2="867" y2="600" stroke="#8c6c70" strokeDasharray="20 8" />
    {CANDLES.map(([high, top, bottom, low], i) => (
      <g key={i} fill={candleColor(i)} shapeRendering="crispEdges">
        <rect x={Math.floor(barX(i))} y={toY(high)} width="1" height={(low - high) / 3} />
        <rect
          x={Math.floor(barX(i)) - 2}
          y={toY(top)}
          width="5"
          height={Math.max(1, (bottom - top) / 3)}
        />
      </g>
    ))}
    <g fill="none">
      <polyline points={linePoints(VWAP)} stroke="#7d5c83" />
      <polyline points={linePoints(SLOW)} stroke="#080808" strokeWidth="1.300" />
      <polyline points={linePoints(FAST)} stroke="#a0a0a0" strokeOpacity="0.85" />
    </g>
    <g stroke="#f0c000" strokeDasharray="5 2" shapeRendering="crispEdges">
      {YELLOW_LEVELS.map(([x1, x2, y]) => (
        <line key={x1} x1={x1} x2={x2} y1={y + 0.5} y2={y + 0.5} />
      ))}
    </g>
    <CrosshairLine />
  </svg>
);

const ttmY = (v) => 820 + v / 3;

const TtmChart = () => {
  const outline = TTM.map((v, i) => `${barX(i)},${ttmY(isNaN(v) ? 430 : +v)}`);
  return (
    <svg viewBox="4 845 1831 122" preserveAspectRatio="none" role="img" aria-label="TTM squeeze">
      <polyline points={outline.join(" ")} fill="none" stroke="#808080" />
      {TTM.map((v, i) => {
        const x = Math.floor(barX(i)) - 2;
        if (isNaN(v)) {
          return v === "r" ? (
            <circle key={i} cx={x + 2.5} cy="963.500" r="2.700" fill={DOT_COLORS.r} />
          ) : (
            <rect key={i} x={x} y="962" width="5" height="3" fill={DOT_COLORS[v]} />
          );
        }
        const before = isNaN(TTM[i - 1]) ? 435 : +TTM[i - 1];
        const rising = +v < before;
        return (
          <g key={i} fill={rising ? "#d0d0d0" : "#797979"} shapeRendering="crispEdges">
            <rect x={x} y={ttmY(+v)} width="4" height={965 - ttmY(+v)} />
            <rect x={x} y="962" width="5" height="3" />
          </g>
        );
      })}
      <CrosshairLine />
    </svg>
  );
};

const BullChart = () => (
  <svg viewBox="4 991 1831 59" preserveAspectRatio="none" role="img" aria-label="Bull test">
    <path d="M4 993.500H1836M4 1048.500H1836" stroke="#000" />
    {CANDLES.map((_, i) => (
      <rect
        key={i}
        x={Math.floor(barX(i)) - 3}
        y="1019"
        width="6"
        height="5"
        fill={isBear(i) ? "#000" : "#777"}
      />
    ))}
    <CrosshairLine />
  </svg>
);

const BacktestChart = () => (
  <svg viewBox="4 1074 1831 60" preserveAspectRatio="none" role="img" aria-label="Trades backtest">
    <CrosshairLine />
  </svg>
);

const Header = ({ cells }) => (
  <StudyHeader>
    {cells.map((cell) => (
      <StudyCell key={cell.text} $width={cell.width} $color={cell.color} $bold={cell.bold}>
        {cell.text}
      </StudyCell>
    ))}
  </StudyHeader>
);

const Ticks = ({ values, open }) => (
  <TickWindow $open={open}>
    <ClippedTicks $open={open}>
      {values.map((value) => (
        <span key={value}>{value}</span>
      ))}
    </ClippedTicks>
  </TickWindow>
);

const App = () => {
  return (
    <Page>
      <GlobalStyle />
      <TitleBar>
        <Logo />
        <WindowTitle>WPG - Charts -  Main@thinkorswim [build 1969]</WindowTitle>
        <WindowButton aria-label="Minimize">
          <svg width="11" height="11"><path d="M0 5.500h11" stroke="#000" /></svg>
        </WindowButton>
        <WindowButton aria-label="Restore">
          <svg width="11" height="11">
            <path d="M.5 2.500h8v8h-8zM2.500 2.500v-2h8v8h-2" fill="none" stroke="#000" />
          </svg>
        </WindowButton>
        <WindowButton aria-label="Close">
          <svg width="11" height="11"><path d="m.5.5 10 10M10.500.5l-10 10" stroke="#000" /></svg>
        </WindowButton>
      </TitleBar>

      <TabBar>
        <ChartsTab>
          <BarsIcon />
          Charts
        </ChartsTab>
        <TabBarSpace />
        <TabBarButton $width={59} $menu aria-label="Screen layout">
          <ScreenBox />
        </TabBarButton>
        <TabBarButton $width={31} aria-label="Pin">
          <BsPinAngleFill size={8} />
        </TabBarButton>
        <TabBarButton $width={31} $menu aria-label="Window menu">
          <FaListUl size={9} />
        </TabBarButton>
      </TabBar>

      <Toolbar>
        <SymbolBox>
          <SymbolInput type="text" aria-label="Symbol" defaultValue="WPG" />
          <SymbolArrow aria-label="Recent symbols">▼</SymbolArrow>
        </SymbolBox>
        <LinkBadge aria-label="Link color">
          <span>9</span>
        </LinkBadge>
        <LastPrice $width={41}>4.74</LastPrice>
        <Quote $width={52} $color="#10a84a">
          <span>+2.52</span>
          <span>+113.51%</span>
        </Quote>
        <Quote $width={40}>
          <span>B: 4.94</span>
          <span>A: 4.97</span>
        </Quote>
        <ToolbarSpace />
        <ToolButton $width={65}>
          <FaRegShareSquare size={11} />
          Share
        </ToolButton>
        <ToolButton $width={31} aria-label="Calendar">
          <CalendarIcon />
        </ToolButton>
        <ToolButton $width={31} aria-label="Studies">
          <FlaskIcon />
        </ToolButton>
        <ToolButton $width={31} aria-label="Settings">
          <FaCog size={11} />
        </ToolButton>
        <ToolButton $width={37} $small $menu>
          1m
        </ToolButton>
        <ToolButton $width={59} $menu>
          <CandlesIcon />
          Style
        </ToolButton>
        <ToolButton $width={83} $menu>
          <FaRegHandPointUp size={11} />
          Drawings
        </ToolButton>
        <ToolButton $width={73} $menu>
          <FlaskIcon />
          Studies
        </ToolButton>
        <ToolButton $width={82} $menu>
          <PatternsIcon />
          Patterns
        </ToolButton>
        <ToolButton $width={31} $menu aria-label="Chart menu">
          <FaListUl size={9} />
        </ToolButton>
      </Toolbar>

      <Body>
        <ChartArea>
          <PanelRow>
            <Panel>
              <Header cells={HEADER_CELLS} />
              <Plot $height={735}>
                <PriceChart />
                <VolumeLabel>Volume = 101,034,882</VolumeLabel>
              </Plot>
            </Panel>
            <Axis $padding="19px 0 26px">
              <AxisToggle aria-label="Scale">
                <ScaleIcon />
              </AxisToggle>
              {PRICES.map((price) => (
                <span key={price}>{price}</span>
              ))}
              <PriceBadge>4.94</PriceBadge>
            </Axis>
          </PanelRow>

          <PanelRow>
            <Panel>
              <Header cells={[{ text: "xxx_TTM", width: 54, color: "#4e4e4e" }]} />
              <Plot $height={122}>
                <TtmChart />
              </Plot>
            </Panel>
            <Axis>
              <Ticks open values={["0.4", "0.3", "0.2", "0.1", "0"]} />
            </Axis>
          </PanelRow>

          <PanelRow>
            <Panel>
              <Header cells={[{ text: "xxx_Bulltest", width: 71, color: "#5e5e5e" }]} />
              <Plot $height={59}>
                <BullChart />
              </Plot>
            </Panel>
            <Axis>
              <Ticks values={["3", "2", "1"]} />
            </Axis>
          </PanelRow>

          <PanelRow $last>
            <Panel $last>
              <Header cells={BACKTEST_CELLS} />
              <Plot $height={60}>
                <BacktestChart />
                <LabelRow>
                  {LABELS.map((label) => (
                    <ChartLabel key={label.text} $width={label.width} $color={label.color}>
                      {label.text}
                    </ChartLabel>
                  ))}
                </LabelRow>
              </Plot>
            </Panel>
            <Axis $padding="50px 0 0">
              <span>50</span>
              <span>0</span>
              <ValueBadge>102.973</ValueBadge>
              <AxisUnit>&lt;millions&gt;</AxisUnit>
            </Axis>
          </PanelRow>

          <TimeAxis>
            <EarlyTimes>
              <Time>9:30</Time>
              <Time>9:45</Time>
            </EarlyTimes>
            <HourTimes>
              {TIMES.map((time) => (
                <Time key={time}>{time}</Time>
              ))}
            </HourTimes>
            <CursorTime>11:46</CursorTime>
          </TimeAxis>

          <ScrollRow>
            <ScrollTrack>
              <ScrollArrow aria-label="Scroll to start">◀</ScrollArrow>
              <ExpandButton aria-label="Expand">
                <ExpandIcon />
              </ExpandButton>
              <ScrollThumb>|||</ScrollThumb>
              <ScrollArrow aria-label="Scroll left">◀</ScrollArrow>
              <ScrollArrow aria-label="Scroll right">▶</ScrollArrow>
            </ScrollTrack>
            <FooterTool aria-label="Pan">
              <PanIcon />
            </FooterTool>
            <FooterTool aria-label="Crosshair">
              <CrossIcon />
            </FooterTool>
            <FooterTool aria-label="Zoom in">
              <ZoomIn size={13} />
            </FooterTool>
            <FooterTool aria-label="Zoom out">
              <ZoomOut size={13} />
            </FooterTool>
            <FooterTool aria-label="Pointer">
              <FaRegHandPointUp size={12} />
            </FooterTool>
            <DrawingSet>Drawing set: Default</DrawingSet>
          </ScrollRow>
        </ChartArea>

        <SideTabs>
          {SIDE_TABS.map((tab) => (
            <SideTab key={tab.text} $height={tab.height} $active={tab.active}>
              <span>{tab.text}</span>
            </SideTab>
          ))}
        </SideTabs>
      </Body>
    </Page>
  );
};

export default App;
